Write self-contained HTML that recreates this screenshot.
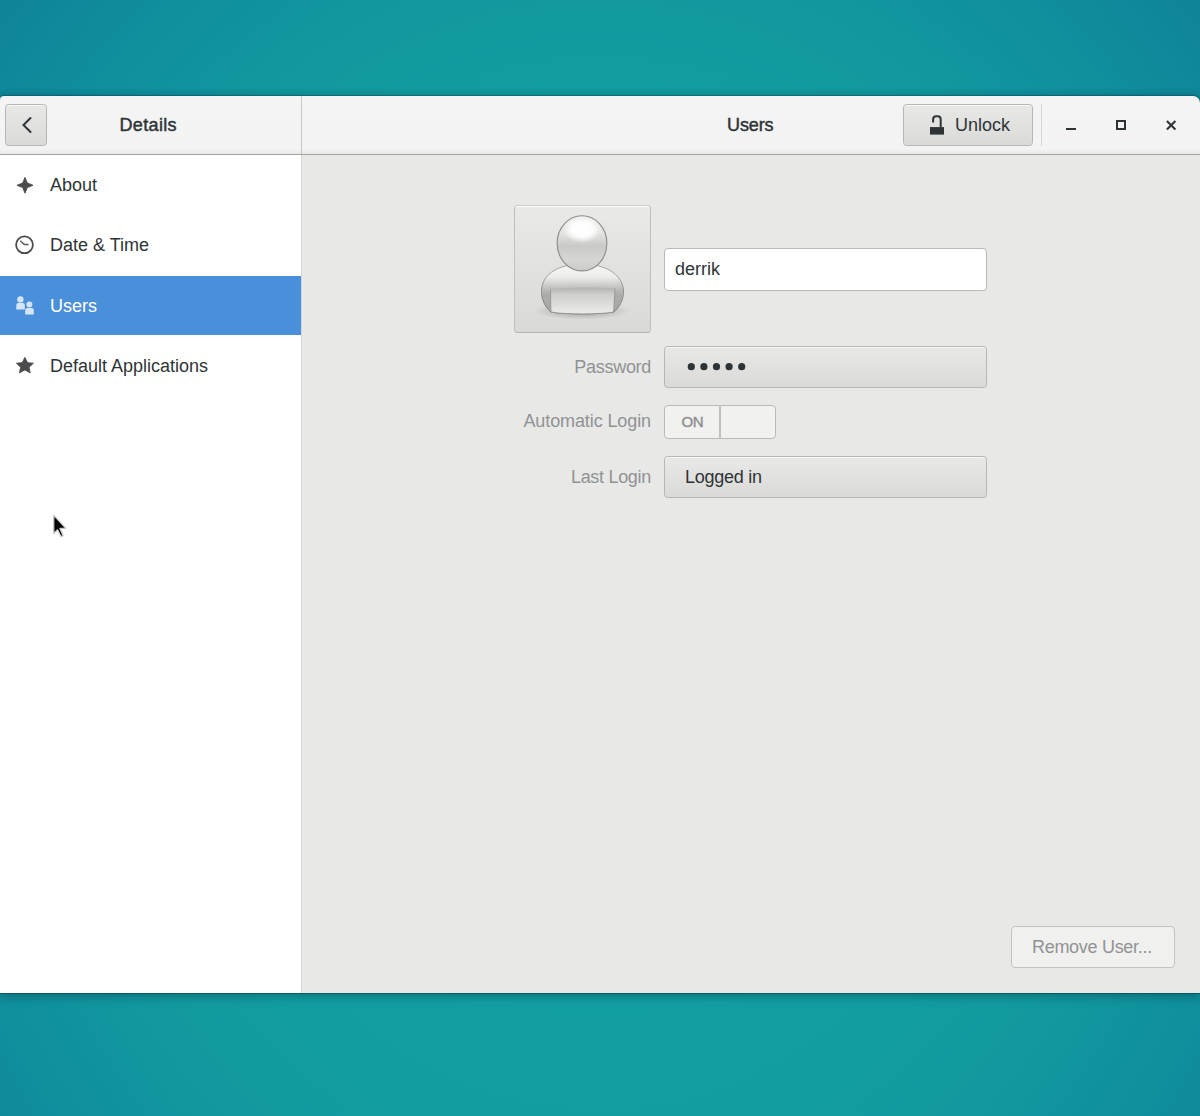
<!DOCTYPE html>
<html><head><meta charset="utf-8">
<style>
*{margin:0;padding:0;box-sizing:border-box}
html,body{width:1200px;height:1116px;overflow:hidden}
body{position:relative;font-family:"Liberation Sans",sans-serif;font-size:18px;color:#2e3436;
background:radial-gradient(ellipse 860px 1000px at 50% 56%, #12a2a2 0%, #129ea1 50%, #129a9f 62%, #10909d 78%, #0e7e98 100%);}
.abs{position:absolute}
.t{position:absolute;white-space:nowrap;line-height:20px;height:20px}
#win{position:absolute;left:0;top:96px;width:1200px;height:897px;border-radius:4px 7px 0 0;overflow:hidden;
box-shadow:0 -1px 0 rgba(0,40,50,0.25),0 1px 0 rgba(0,40,50,0.35), 0 0 8px rgba(0,30,40,0.25), 0 4px 12px rgba(0,30,40,0.2);}
#hdr{position:absolute;left:0;top:0;width:1200px;height:59px;background:linear-gradient(#f4f4f4 0,#f3f3f3 53px,#e9e9e8 58px);border-bottom:1px solid #a3a49f}
#side{position:absolute;left:0;top:59px;width:301px;height:838px;background:#fff}
#content{position:absolute;left:302px;top:59px;width:898px;height:838px;background:#e8e8e7}
#vdiv1{position:absolute;left:301px;top:0;width:1px;height:58px;background:#c9c9c6}
#vdiv2{position:absolute;left:301px;top:59px;width:1px;height:838px;background:#d5d5d3}
.btn{position:absolute;border:1px solid #b6b6b3;border-radius:3.5px;background:linear-gradient(#e8e8e7,#dadad8);box-shadow:inset 0 1px 0 rgba(255,255,255,0.6)}
.lbl{color:#909394}
</style></head><body>
<div id="win">
  <div id="hdr"></div>
  <div id="vdiv1"></div>
  <div id="side"></div>
  <div id="vdiv2"></div>
  <div id="content"></div>
</div>

<!-- header: back button -->
<div class="btn" style="left:5px;top:104px;width:42px;height:42px;"></div>
<svg class="abs" style="left:5px;top:104px" width="42" height="42" viewBox="0 0 42 42">
  <path d="M25.5 14 L18.5 21 L25.5 28" fill="none" stroke="#2e3436" stroke-width="2" stroke-linecap="round" stroke-linejoin="miter"/>
</svg>
<div class="t" style="left:119.5px;top:115px;-webkit-text-stroke:0.45px #2e3436;letter-spacing:0.35px">Details</div>

<div class="t" style="left:727px;top:115px;-webkit-text-stroke:0.45px #2e3436;letter-spacing:-0.1px">Users</div>

<!-- unlock -->
<div class="btn" style="left:903px;top:104px;width:130px;height:42px;"></div>
<svg class="abs" style="left:922px;top:110px" width="30" height="30" viewBox="922 110 30 30">
  <path d="M933.1 122.4 V119.4 Q933.1 116.2 936.3 116.2 H937.6 Q940.7 116.2 940.7 119.4 V127.5" fill="none" stroke="#2e3436" stroke-width="2"/>
  <rect x="930" y="127.1" width="14" height="7.5" fill="#2e3436"/>
</svg>
<div class="t" style="left:955px;top:115px;">Unlock</div>
<div class="abs" style="left:1041px;top:104px;width:1px;height:42px;background:#d8d8d6"></div>

<!-- window controls -->
<div class="abs" style="left:1066px;top:127.5px;width:10px;height:2.5px;background:#2e3436"></div>
<div class="abs" style="left:1116px;top:120px;width:10px;height:10px;border:2.5px solid #2e3436"></div>
<svg class="abs" style="left:1164px;top:118px" width="14" height="14" viewBox="0 0 14 14">
  <path d="M2.9 3 L11.4 11.4 M11.4 3 L2.9 11.4" stroke="#2e3436" stroke-width="2.1"/>
</svg>

<!-- sidebar -->
<div class="abs" style="left:0;top:276px;width:301px;height:59px;background:#4a8fd9"></div>
<svg class="abs" style="left:0;top:155px" width="50" height="240" viewBox="0 155 50 240">
  <path d="M25 177.4 L27.3 183 L33 185.3 L27.3 187.6 L25 193.2 L22.7 187.6 L17 185.3 L22.7 183 Z" fill="#4b4b4d" stroke="#4b4b4d" stroke-width="0.9" stroke-linejoin="round"/>
  <circle cx="24.5" cy="244.8" r="8.4" fill="none" stroke="#4b4b4d" stroke-width="1.8"/>
  <path d="M20.3 240.8 L24.3 244.6 L28.5 244.6" fill="none" stroke="#5a5a5c" stroke-width="1.5"/>
  <path d="M24.9 357.3 L27.6 362.6 L33.5 363.2 L29.2 367.3 L30.2 373 L24.9 370 L19.4 373 L20.5 367.3 L16.3 363.2 L22.2 362.6 Z" fill="#4b4b4d" stroke="#4b4b4d" stroke-width="0.7" stroke-linejoin="round"/>
  <g fill="#d3e5f6">
    <circle cx="20.4" cy="299.4" r="3.2"/>
    <path d="M16.3 309.4 V305 Q16.3 303 18.3 303 H22.8 Q24.8 303 24.8 305 V309.4 Z"/>
    <circle cx="29.4" cy="304.4" r="3"/>
    <path d="M25.2 314.5 V310 Q25.2 308 27.2 308 H31.8 Q33.8 308 33.8 310 V314.5 Z"/>
  </g>
</svg>
<div class="t" style="left:50px;top:175px;">About</div>
<div class="t" style="left:50px;top:235px;">Date &amp; Time</div>
<div class="t" style="left:50px;top:296px;color:#fff">Users</div>
<div class="t" style="left:50px;top:356px;">Default Applications</div>

<!-- content -->
<div class="btn" style="left:514px;top:205px;width:137px;height:128px;border-color:#cdcdca #bfbfbc #b3b3b0;border-radius:3.5px;box-shadow:inset 0 1px 0 rgba(255,255,255,0.85);background:linear-gradient(#e9e9e8,#d9d9d7)"></div>
<svg class="abs" style="left:514px;top:206px" width="137" height="127" viewBox="514 206 137 127">
  <defs>
    <linearGradient id="hg" x1="0" y1="216" x2="0" y2="271" gradientUnits="userSpaceOnUse">
      <stop offset="0" stop-color="#ededec"/>
      <stop offset="0.3" stop-color="#e4e4e2"/>
      <stop offset="0.55" stop-color="#c9c9c6"/>
      <stop offset="0.8" stop-color="#d6d6d3"/>
      <stop offset="1" stop-color="#cacac7"/>
    </linearGradient>
    <radialGradient id="hl" cx="582" cy="229.5" r="19" gradientUnits="userSpaceOnUse" gradientTransform="translate(582 229.5) scale(1 0.71) translate(-582 -229.5)">
      <stop offset="0" stop-color="#fff" stop-opacity="1"/>
      <stop offset="0.55" stop-color="#fff" stop-opacity="0.9"/>
      <stop offset="1" stop-color="#fff" stop-opacity="0"/>
    </radialGradient>
    <linearGradient id="bg1" x1="0" y1="264" x2="0" y2="316" gradientUnits="userSpaceOnUse">
      <stop offset="0" stop-color="#f6f6f5"/>
      <stop offset="0.25" stop-color="#ececea"/>
      <stop offset="0.5" stop-color="#b9b9b5"/>
      <stop offset="0.6" stop-color="#acaca8"/>
      <stop offset="1" stop-color="#a6a6a2"/>
    </linearGradient>
    <linearGradient id="pg1" x1="0" y1="288" x2="0" y2="314" gradientUnits="userSpaceOnUse">
      <stop offset="0" stop-color="#b4b4b0"/>
      <stop offset="0.25" stop-color="#cfcfcc"/>
      <stop offset="1" stop-color="#ebebea"/>
    </linearGradient>
    <linearGradient id="bst" x1="0" y1="264" x2="0" y2="314" gradientUnits="userSpaceOnUse">
      <stop offset="0" stop-color="#a9a9a6"/>
      <stop offset="0.6" stop-color="#8d8d8a"/>
      <stop offset="1" stop-color="#7a7a77"/>
    </linearGradient>
    <radialGradient id="sh" cx="582" cy="311" r="48" gradientUnits="userSpaceOnUse" gradientTransform="translate(0 311) scale(1 0.18) translate(0 -311)">
      <stop offset="0" stop-color="#000" stop-opacity="0.28"/>
      <stop offset="1" stop-color="#000" stop-opacity="0"/>
    </radialGradient>
  </defs>
  <ellipse cx="582" cy="311" rx="50" ry="9" fill="url(#sh)"/>
  <path d="M551 312 C546 308 541 300 541.5 290 C542.5 273 560 264 582 264 C604 264 621.5 273 623.5 290 C624 300 619 308 613.5 312 C600 314.5 565 314.5 551 312 Z" fill="url(#bg1)" stroke="url(#bst)" stroke-width="1"/>
  <path d="M550.5 289.5 C570 287 595 287 615 288.5 L613.5 312 C600 314.5 565 314.5 551 312 Z" fill="url(#pg1)"/>
  <path d="M550.5 289.5 L551 312 C565 314.5 600 314.5 613.5 312 L615 288.5" fill="none" stroke="#7d7d7a" stroke-width="0.8" opacity="0.7"/>
  <ellipse cx="582" cy="243.3" rx="24.9" ry="27.6" fill="url(#hg)" stroke="#8c8c89" stroke-width="1.1"/>
  <ellipse cx="582" cy="229.5" rx="19" ry="13.5" fill="url(#hl)"/>
</svg>
<div class="abs" style="left:664px;top:248px;width:323px;height:43px;border:1px solid #b9b9b6;border-radius:4px;background:#fff"></div>
<div class="t" style="left:675px;top:259px;">derrik</div>

<div class="t lbl" style="right:549px;top:357px;letter-spacing:-0.3px">Password</div>
<div class="btn" style="left:664px;top:346px;width:323px;height:42px;"></div>
<svg class="abs" style="left:680px;top:358px" width="70" height="18" viewBox="680 358 70 18">
  <g fill="#2e3436"><circle cx="691.3" cy="366.7" r="3.6"/><circle cx="703.9" cy="366.7" r="3.6"/><circle cx="716.5" cy="366.7" r="3.6"/><circle cx="729.1" cy="366.7" r="3.6"/><circle cx="741.7" cy="366.7" r="3.6"/></g>
</svg>

<div class="t lbl" style="right:549px;top:411px;letter-spacing:-0.1px">Automatic Login</div>
<div class="abs" style="left:664px;top:405px;width:112px;height:34px;border:1px solid #b9b9b6;border-radius:4px;background:#f1f1f0"></div>
<div class="abs" style="left:719px;top:405px;width:1.5px;height:34px;background:#c0c0bd"></div>
<div class="t lbl" style="left:681.5px;top:411.5px;font-size:15px;-webkit-text-stroke:0.45px #8a8d8e;letter-spacing:-0.4px">ON</div>

<div class="t lbl" style="right:549px;top:467px;letter-spacing:-0.3px">Last Login</div>
<div class="btn" style="left:664px;top:456px;width:323px;height:42px;"></div>
<div class="t" style="left:685px;top:467px;letter-spacing:-0.25px">Logged in</div>

<div class="abs" style="left:1011px;top:926px;width:164px;height:42px;border:1px solid #c3c3c0;border-radius:4px;background:#f0f0ef"></div>
<div class="t lbl" style="left:1032px;top:937px;letter-spacing:-0.3px">Remove User...</div>

<svg class="abs" style="left:44px;top:510px" width="30" height="34" viewBox="44 510 30 34">
  <path d="M53.8 515.4 V533.4 L57.6 529.8 L61 536.6 L63 535.6 L59.9 528.4 L65.6 528.2 Z" fill="#000" stroke="#d2d2d2" stroke-width="1.2" stroke-linejoin="round" style="filter:drop-shadow(0.5px 0.8px 0.5px rgba(0,0,0,0.3))"/>
</svg>
</body></html>
